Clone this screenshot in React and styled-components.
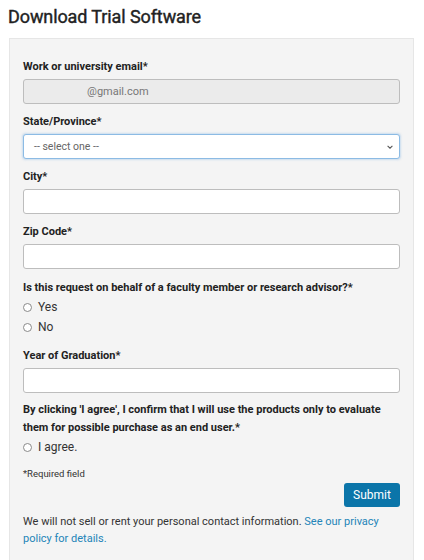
import React from 'react';
import styled, { createGlobalStyle } from 'styled-components';

const GlobalStyle = createGlobalStyle`
  body {
    margin: 0;
    background: #ffffff;
    font-family: Roboto, "Liberation Sans", Arial, sans-serif;
    color: #222222;
  }
`;

const Page = styled.div`
  padding: 0 10px 0 9px;
`;

const Title = styled.h1`
  font-size: 18px;
  line-height: 24px;
  font-weight: 400;
  letter-spacing: -0.1px;
  -webkit-text-stroke: 0.4px #222222;
  margin: 5px 0 9px -1px;
  color: #222222;
`;

const Panel = styled.form`
  background: #f4f4f4;
  border: 1px solid #e6e6e6;
  padding: 19px 13px 30px 13px;
`;

const Field = styled.div`
  margin-bottom: ${(p) => p.gap || 9}px;
`;

const Label = styled.label`
  display: block;
  font-size: 11px;
  line-height: 18px;
  font-weight: 700;
  color: #222222;
  margin-bottom: ${(p) => (p.tight ? 0 : 3)}px;
`;

const TextInput = styled.input`
  box-sizing: border-box;
  display: block;
  width: 100%;
  height: 25px;
  border: 1px solid #bdbdbd;
  border-radius: 3px;
  background: ${(p) => (p.disabled ? '#ebebeb' : '#ffffff')};
  color: #777777;
  font-family: inherit;
  font-size: 11px;
  padding: 0 9px;
  text-indent: ${(p) => p.indent || 0}px;
  outline: none;
`;

const SelectBox = styled.div`
  height: 25px;
  box-sizing: border-box;
  border: 1px solid #8cbbe4;
  border-radius: 3px;
  background: #ffffff;
  box-shadow: 0 0 2px 1px rgba(120, 175, 225, 0.35);
  display: flex;
  align-items: center;
  justify-content: space-between;
  padding: 0 5px 0 10px;
  font-size: 10.5px;
  color: #666666;
`;

const Chevron = styled.svg`
  width: 8px;
  height: 8px;
`;

const RadioRow = styled.label`
  display: flex;
  align-items: center;
  gap: 6px;
  font-size: 12px;
  line-height: 20px;
  color: #333333;
`;

const RadioCircle = styled.span`
  box-sizing: border-box;
  width: 9px;
  height: 9px;
  border: 1px solid #8a8a8a;
  border-radius: 50%;
  background: #ffffff;
`;

const Note = styled.div`
  font-size: 9.5px;
  line-height: 14px;
  color: #333333;
  margin-top: 10px;
`;

const Actions = styled.div`
  display: flex;
  justify-content: flex-end;
  margin-top: 2px;
`;

const SubmitButton = styled.button`
  height: 24px;
  width: 56px;
  border: none;
  border-radius: 3px;
  background: #0b75a9;
  color: #ffffff;
  font-family: inherit;
  font-size: 12px;
  padding: 0;
`;

const Privacy = styled.p`
  font-size: 11px;
  line-height: 17px;
  color: #333333;
  margin: 6px 0 0 0;

  a {
    color: #2384b8;
    text-decoration: none;
  }
`;

const Radio = ({ children }) => (
  <RadioRow>
    <RadioCircle />
    {children}
  </RadioRow>
);

export default function App() {
  return (
    <Page>
      <GlobalStyle />
      <Title>Download Trial Software</Title>
      <Panel onSubmit={(e) => e.preventDefault()}>
        <Field>
          <Label>Work or university email*</Label>
          <TextInput disabled value="@gmail.com" indent={54} readOnly />
        </Field>
        <Field>
          <Label>State/Province*</Label>
          <SelectBox>
            <span>-- select one --</span>
            <Chevron viewBox="0 0 10 10">
              <path d="M2 3.5 L5 6.5 L8 3.5" fill="none" stroke="#555" strokeWidth="1.3" />
            </Chevron>
          </SelectBox>
        </Field>
        <Field>
          <Label>City*</Label>
          <TextInput />
        </Field>
        <Field gap={10}>
          <Label>Zip Code*</Label>
          <TextInput />
        </Field>
        <Field gap={10}>
          <Label tight>Is this request on behalf of a faculty member or research advisor?*</Label>
          <Radio>Yes</Radio>
          <Radio>No</Radio>
        </Field>
        <Field gap={8}>
          <Label>Year of Graduation*</Label>
          <TextInput />
        </Field>
        <Field gap={0}>
          <Label tight>
            By clicking 'I agree', I confirm that I will use the products only to evaluate them for
            possible purchase as an end user.*
          </Label>
          <Radio>I agree.</Radio>
        </Field>
        <Note>*Required field</Note>
        <Actions>
          <SubmitButton type="submit">Submit</SubmitButton>
        </Actions>
        <Privacy>
          We will not sell or rent your personal contact information.{' '}
          <a href="#privacy">See our privacy policy for details.</a>
        </Privacy>
      </Panel>
    </Page>
  );
}
